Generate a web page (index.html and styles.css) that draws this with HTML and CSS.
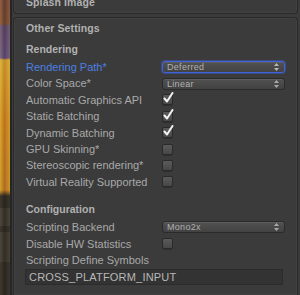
FILE: index.html
```html
<!DOCTYPE html>
<html lang="en">
<head>
  <meta charset="UTF-8">
  <title>Player Settings</title>
  <link rel="stylesheet" href="styles.css">
</head>
<body>
  <div class="window">
    <div class="scene-strip"></div>
    <div class="strip-edge"></div>

    <div class="inspector">
      <div class="box splash">
        <div class="box-title">Splash Image</div>
      </div>

      <div class="box settings">
        <div class="box-title">Other Settings</div>

        <div class="section-title first">Rendering</div>
        <div class="row">
          <span class="label active">Rendering Path*</span>
          <div class="dropdown focused"><span>Deferred</span><svg class="arrows" width="5" height="8" viewBox="0 0 5 8"><path d="M2.5 0 L5 3 L0 3 Z M0 5 L5 5 L2.5 8 Z" fill="#b8b8b8"/></svg></div>
        </div>
        <div class="row">
          <span class="label">Color Space*</span>
          <div class="dropdown"><span>Linear</span><svg class="arrows" width="5" height="8" viewBox="0 0 5 8"><path d="M2.5 0 L5 3 L0 3 Z M0 5 L5 5 L2.5 8 Z" fill="#a8a8a8"/></svg></div>
        </div>
        <div class="row">
          <span class="label">Automatic Graphics API</span>
          <div class="checkbox"><svg class="tick" width="13" height="13" viewBox="0 0 13 13"><path d="M2.5 6.5 L5 9.5 L10.5 1" stroke="#f2f2f2" stroke-width="2" fill="none" stroke-linecap="round" stroke-linejoin="round"/></svg></div>
        </div>
        <div class="row">
          <span class="label">Static Batching</span>
          <div class="checkbox"><svg class="tick" width="13" height="13" viewBox="0 0 13 13"><path d="M2.5 6.5 L5 9.5 L10.5 1" stroke="#f2f2f2" stroke-width="2" fill="none" stroke-linecap="round" stroke-linejoin="round"/></svg></div>
        </div>
        <div class="row">
          <span class="label">Dynamic Batching</span>
          <div class="checkbox"><svg class="tick" width="13" height="13" viewBox="0 0 13 13"><path d="M2.5 6.5 L5 9.5 L10.5 1" stroke="#f2f2f2" stroke-width="2" fill="none" stroke-linecap="round" stroke-linejoin="round"/></svg></div>
        </div>
        <div class="row">
          <span class="label">GPU Skinning*</span>
          <div class="checkbox"></div>
        </div>
        <div class="row">
          <span class="label">Stereoscopic rendering*</span>
          <div class="checkbox"></div>
        </div>
        <div class="row">
          <span class="label">Virtual Reality Supported</span>
          <div class="checkbox"></div>
        </div>

        <div class="section-title">Configuration</div>
        <div class="row">
          <span class="label">Scripting Backend</span>
          <div class="dropdown"><span>Mono2x</span><svg class="arrows" width="5" height="8" viewBox="0 0 5 8"><path d="M2.5 0 L5 3 L0 3 Z M0 5 L5 5 L2.5 8 Z" fill="#a8a8a8"/></svg></div>
        </div>
        <div class="row">
          <span class="label">Disable HW Statistics</span>
          <div class="checkbox"></div>
        </div>
        <div class="row">
          <span class="label">Scripting Define Symbols</span>
        </div>
        <div class="text-field">CROSS_PLATFORM_INPUT</div>
      </div>
    </div>

    <div class="gutter"></div>
    <div class="scrollbar"></div>
  </div>
</body>
</html>
```

FILE: styles.css
```css
html, body {
  margin: 0;
  height: 100%;
  overflow: hidden;
}

body {
  background: #3b3b3b;
  color: #a9a9a9;
  font-family: "Liberation Sans", Arial, sans-serif;
  font-size: 11px;
}

.window {
  display: flex;
  height: 295px;
}

/* a slice of the scene view peeking out on the left */
.scene-strip {
  width: 10px;
  flex-shrink: 0;
  background:
    linear-gradient(to right, rgba(255, 220, 120, 0.35), rgba(90, 50, 20, 0.35) 45%, rgba(255, 210, 90, 0.25)),
    linear-gradient(to bottom,
      #6e4c46 0, #70503f 24px,
      #5b4f80 26px, #5f5488 58px,
      #caa03c 60px, #c48a2c 120px, #b8842c 190px,
      #2e2e2e 196px, #2e2e2e 208px,
      #3a3a3a 208px, #3a3a3a 226px,
      #2e2e2e 226px, #2e2e2e 232px,
      #393939 232px, #393939 262px,
      #2f2f2f 262px);
  background-blend-mode: overlay, normal;
}

.strip-edge {
  width: 2px;
  flex-shrink: 0;
  background: #262626;
}

.inspector {
  flex: 1;
  padding-left: 1px;
  display: flex;
  flex-direction: column;
  gap: 3px;
}

.box {
  border: 1px solid #2a2a2a;
  border-radius: 4px;
  box-shadow: inset 0 0 0 1px #414141;
  padding: 0 12px;
}

.splash {
  margin-top: -3px;
  height: 16px;
  border-top: none;
  border-top-left-radius: 0;
  border-top-right-radius: 0;
}

.splash .box-title {
  padding-top: 0;
  line-height: 11px;
}

.settings {
  flex: 1;
  border-bottom: none;
  border-bottom-left-radius: 0;
  border-bottom-right-radius: 0;
}

.box-title {
  padding-top: 4px;
  line-height: 13px;
  font-weight: bold;
  font-size: 10.5px;
  color: #b1b1b1;
  letter-spacing: 0.1px;
}

.section-title {
  margin-top: 13px;
  line-height: 13px;
  font-weight: bold;
  font-size: 10.5px;
  color: #b1b1b1;
}

.section-title.first {
  margin-top: 8px;
}

.section-title + .row {
  margin-top: 3px;
}

.row {
  display: flex;
  align-items: center;
  height: 16.4px;
  line-height: 16.4px;
}

.label {
  width: 136px;
  flex-shrink: 0;
  white-space: nowrap;
}

.label.active {
  color: #4c7fe2;
}

.dropdown {
  width: 112px;
  height: 10px;
  display: flex;
  align-items: center;
  justify-content: space-between;
  padding: 0 5px 0 4px;
  border: 1px solid #2a2a2a;
  border-radius: 3px;
  background: linear-gradient(#515151, #424242);
  box-shadow: inset 0 1px 0 rgba(255, 255, 255, 0.08);
  font-size: 9px;
  line-height: 10px;
  color: #b0b0b0;
  letter-spacing: 0.3px;
}

.dropdown.focused {
  border-color: #3e62dc;
  box-shadow: 0 0 0 1px rgba(62, 98, 220, 0.45), inset 0 1px 0 rgba(255, 255, 255, 0.08);
}

.checkbox {
  position: relative;
  width: 9px;
  height: 9px;
  border: 1px solid #2a2a2a;
  border-radius: 2px;
  background: linear-gradient(#5a5a5a, #474747);
  box-shadow: 0 1px 0 rgba(0, 0, 0, 0.2);
}

.tick {
  position: absolute;
  left: -1px;
  top: -3px;
}

.text-field {
  margin: 1px 2px 0 -1px;
  height: 14px;
  line-height: 14px;
  padding-left: 3px;
  border: 1px solid #2c2c2c;
  background: #333333;
  color: #b8b8b8;
  letter-spacing: 0.2px;
}

.gutter {
  width: 8px;
  flex-shrink: 0;
  background: linear-gradient(to right, #3b3b3b 0, #3b3b3b 4px, #2b2b2b 4px, #2b2b2b 7px, #343434 7px);
}

.scrollbar {
  width: 12px;
  flex-shrink: 0;
  background: linear-gradient(to right, #4a4a4a, #585858 40%, #525252);
}
```
